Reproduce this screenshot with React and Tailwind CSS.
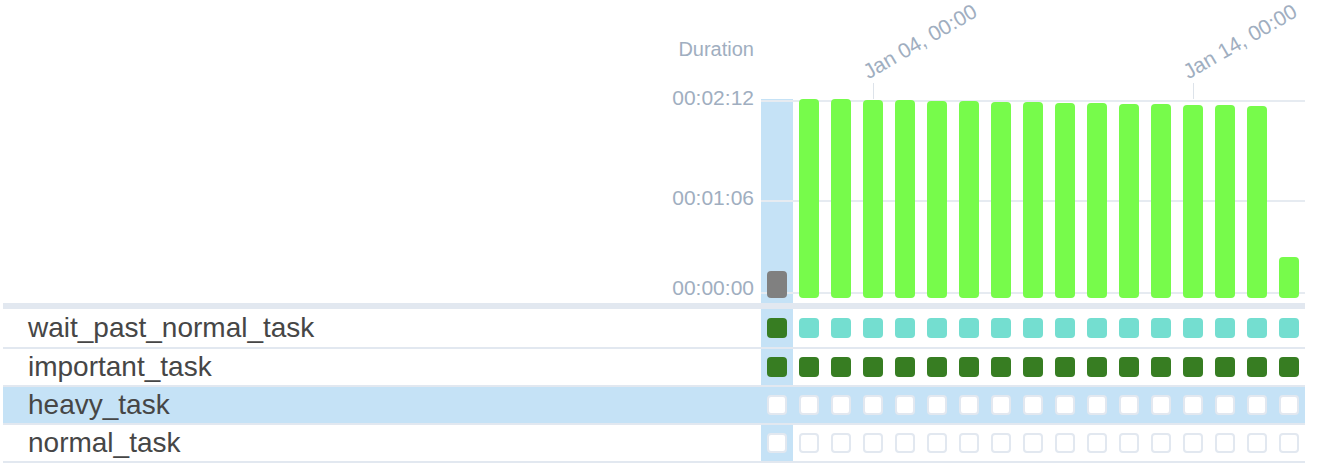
import React from "react";

const runs = [
  { duration: 27, state: "queued" },
  ...[199, 199, 198, 198, 197, 197, 196, 196, 195, 195, 194, 194, 193, 193, 192].map((d) => ({ duration: d, state: "success" })),
  { duration: 41, state: "success" },
];

// columns that carry a date tick on the x axis
const dateTicks = { 3: "Jan 04, 00:00", 13: "Jan 14, 00:00" };

const tasks = [
  { name: "wait_past_normal_task", states: ["success", ...Array(16).fill("reschedule")] },
  { name: "important_task", states: Array(17).fill("success") },
  { name: "heavy_task", states: Array(17).fill("none"), selected: true },
  { name: "normal_task", states: Array(17).fill("none") },
];

const squareClass = {
  success: "bg-[#377d22]",
  reschedule: "bg-[#74ded0]",
  none: "bg-white border-2 border-[#e2e8f0]",
};

const barClass = {
  queued: "bg-[#808080]",
  success: "bg-[#77fb4b]",
};

const StatusSquare = ({ state }) => (
  <div className={`w-[20px] h-[20px] rounded-[4px] ${squareClass[state]}`} />
);

const Bar = ({ run }) => (
  <div
    className={`relative z-[2] shrink-0 w-[20px] rounded-[4px] ${barClass[run.state]}`}
    style={{ height: run.duration }}
  />
);

const RunColumn = ({ run, index }) => {
  const label = dateTicks[index];
  if (index === 0) {
    return (
      <div className="w-[32px] h-full flex flex-col pt-[99px]">
        <div className="flex-1 bg-[#c5e2f6] flex items-end justify-center pb-[5px]">
          <Bar run={run} />
        </div>
      </div>
    );
  }
  return (
    <div className="relative w-[32px] h-full flex flex-col items-center pt-[83px] pb-[5px]">
      {label && (
        <span className="absolute left-[13px] top-[61px] origin-bottom-left -rotate-30 whitespace-nowrap text-[21px] leading-none text-[#a0aec0]">
          {label}
        </span>
      )}
      <div className={`w-px h-[16px] shrink-0 ${label ? "bg-[#dde3ea]" : ""}`} />
      <div className="flex-1 min-h-0" />
      <Bar run={run} />
    </div>
  );
};

const DurationChart = () => (
  <div className="relative w-[544px] h-[303px]">
    {/* horizontal grid lines */}
    <div className="absolute z-[1] inset-x-0 top-[100px] h-[2px] bg-[#e6ebf1]" />
    <div className="absolute z-[1] inset-x-0 top-[200px] h-[2px] bg-[#e6ebf1]" />
    <div className="absolute z-[1] inset-x-0 top-[292px] h-[2px] bg-[#e6ebf1]" />

    <div className="flex h-full">
      {runs.map((run, i) => (
        <RunColumn key={i} run={run} index={i} />
      ))}
    </div>
  </div>
);

const DurationAxis = () => (
  <div className="w-[758px] h-[303px] flex flex-col items-end pt-[39px] pr-[7px] text-[#a0aec0] leading-none">
    <div className="text-[20px]">Duration</div>
    <div className="mt-[28px] text-[21px]">00:02:12</div>
    <div className="mt-[79px] text-[21px]">00:01:06</div>
    <div className="mt-[69px] text-[21px]">00:00:00</div>
  </div>
);

export default function App() {
  return (
    <div className="w-[1322px] h-[476px] bg-white pl-[3px] font-['Liberation_Sans',Arial,sans-serif]">
      <div className="flex w-[1302px]">
        <DurationAxis />
        <DurationChart />
      </div>

      <div className="w-[1302px] h-[6px] bg-[#e2e8f0]" />

      {tasks.map((task, r) => (
        <div
          key={task.name}
          className={`flex w-[1302px] border-b-2 border-[#e2e8f0] ${r === 0 ? "h-[40px]" : "h-[38px]"} ${
            task.selected ? "bg-[#c5e2f6]" : "bg-white"
          }`}
        >
          <div className="w-[758px] flex items-center pl-[25px] text-[28px] text-[#464646]">{task.name}</div>
          {task.states.map((s, i) => (
            <div
              key={i}
              className={`w-[32px] flex items-center justify-center ${i === 0 ? "bg-[#c5e2f6]" : ""}`}
            >
              <StatusSquare state={s} />
            </div>
          ))}
        </div>
      ))}
    </div>
  );
}
